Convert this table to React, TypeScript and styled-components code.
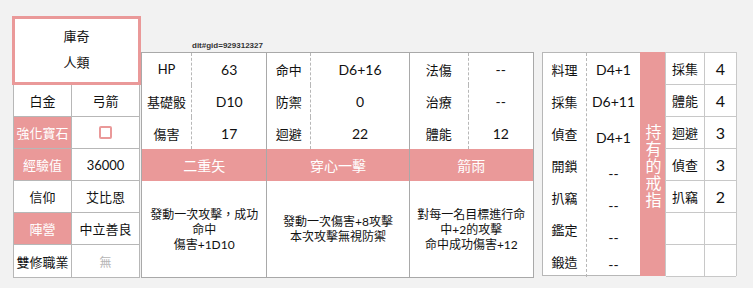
import React from 'react';
import styled, { createGlobalStyle } from 'styled-components';

const pink = '#ea9999';
const line = '#b7b7b7';

const GlobalStyle = createGlobalStyle`
  html, body {
    margin: 0;
    padding: 0;
    background: #f2f2f2;
  }
  body {
    font-family: "Lato", "Noto Sans CJK TC", sans-serif;
    color: #111;
  }
`;

const Page = styled.div`
  display: flex;
  align-items: flex-start;
  padding: 16px 0 0 12px;
  min-height: 272px;
  background: #f2f2f2;
`;

/* ---------- left: name card + profile table ---------- */

const LeftCol = styled.div`
  width: 129px;
  display: flex;
  flex-direction: column;
`;

const NameCard = styled.div`
  box-sizing: border-box;
  height: 69px;
  border: 3px solid ${pink};
  background: #fff;
  padding-top: 4px;
  display: flex;
  flex-direction: column;
  align-items: center;
  font-size: 13px;
  line-height: 26px;
`;

const Profile = styled.div`
  margin: 0 1px;
  display: grid;
  grid-template-columns: 58px 1fr;
  grid-auto-rows: 32px;
  background: #fff;
  border: 1px solid ${line};
  border-top: none;
`;

const ProfileCell = styled.div<{ $tone?: 'pink' | 'muted'; $left?: boolean; $last?: boolean }>`
  display: flex;
  align-items: center;
  justify-content: center;
  font-size: ${(p) => (p.$tone === 'muted' ? '12px' : '13px')};
  background: ${(p) => (p.$tone === 'pink' ? pink : '#fff')};
  color: ${(p) => (p.$tone === 'pink' ? '#fff' : p.$tone === 'muted' ? '#b5b5b5' : '#111')};
  border-right: ${(p) => (p.$left ? `1px solid ${line}` : 'none')};
  border-bottom: ${(p) => (p.$last ? 'none' : `1px solid ${line}`)};
`;

const CheckBox = styled.span`
  box-sizing: border-box;
  width: 13px;
  height: 13px;
  border: 2px solid ${pink};
  border-radius: 2px;
  background: #fff;
`;

/* ---------- middle: combat stats + skills ---------- */

const MidCol = styled.div`
  display: flex;
  flex-direction: column;
`;

const SheetRef = styled.div`
  margin-top: 24px;
  padding-left: 51px;
  height: 12px;
  font-family: "Liberation Sans", sans-serif;
  font-size: 8px;
  font-weight: bold;
  line-height: 12px;
  color: #333;
`;

const CombatTable = styled.div`
  display: flex;
  width: 393px;
  box-sizing: border-box;
  border: 1px solid #a9a9a9;
  background: #fff;
`;

const Group = styled.div<{ $w: number; $last?: boolean }>`
  width: ${(p) => p.$w}px;
  display: flex;
  flex-direction: column;
  border-right: ${(p) => (p.$last ? 'none' : '1px solid #a9a9a9')};
`;

const StatGrid = styled.div<{ $label: number }>`
  display: grid;
  grid-template-columns: ${(p) => p.$label}px 1fr;
  grid-auto-rows: 32px;
`;

const StatLabel = styled.div`
  display: flex;
  align-items: center;
  justify-content: center;
  font-size: 13px;
  border-right: 1px dashed ${line};
`;

const StatValue = styled.div`
  display: flex;
  align-items: center;
  justify-content: center;
  font-size: 14px;
`;

const SkillName = styled.div`
  height: 32px;
  display: flex;
  align-items: center;
  justify-content: center;
  background: ${pink};
  color: #fff;
  font-size: 14px;
`;

const SkillText = styled.div`
  height: 96px;
  display: flex;
  flex-direction: column;
  align-items: center;
  justify-content: center;
  font-size: 12px;
  line-height: 15px;
  text-align: center;
`;

/* ---------- right: life skills + ring ---------- */

const RightCol = styled.div`
  margin: 36px 0 0 8px;
  display: flex;
  height: 224px;
`;

const Crafts = styled.div`
  display: grid;
  grid-template-columns: 44px 53px;
  box-sizing: border-box;
  border: 1px solid ${line};
  border-right: none;
  background: #fff;
`;

const CraftList = styled.div<{ $dashed?: boolean }>`
  display: flex;
  flex-direction: column;
  border-right: ${(p) => (p.$dashed ? `1px dashed ${line}` : 'none')};
`;

const CraftItem = styled.div<{ $h: number; $value?: boolean }>`
  height: ${(p) => p.$h}px;
  display: flex;
  align-items: center;
  justify-content: center;
  font-size: ${(p) => (p.$value ? '14px' : '13px')};
`;

const RingLabel = styled.div`
  width: 25px;
  background: ${pink};
  color: #fff;
  display: flex;
  align-items: center;
  justify-content: center;
  padding-top: 4px;
  box-sizing: border-box;
`;

const VerticalText = styled.span`
  writing-mode: vertical-rl;
  font-size: 16px;
  letter-spacing: 1px;
  line-height: 16px;
`;

const RingGrid = styled.div`
  display: grid;
  grid-template-columns: 39px 31px;
  grid-auto-rows: 32px;
  box-sizing: border-box;
  border: 1px solid #c8c8c8;
  border-bottom: none;
  background: #fff;
`;

const RingCell = styled.div<{ $num?: boolean }>`
  display: flex;
  align-items: center;
  justify-content: center;
  font-size: ${(p) => (p.$num ? '16px' : '13px')};
  border-bottom: 1px solid #c8c8c8;
  border-right: ${(p) => (p.$num ? 'none' : '1px solid #c8c8c8')};
`;

const profile: { l: string; r: string; pinkLabel?: boolean; check?: boolean; muted?: boolean }[] = [
  { l: '白金', r: '弓箭' },
  { l: '強化寶石', r: '', pinkLabel: true, check: true },
  { l: '經驗值', r: '36000', pinkLabel: true },
  { l: '信仰', r: '艾比恩' },
  { l: '陣營', r: '中立善良', pinkLabel: true },
  { l: '雙修職業', r: '無', muted: true },
];

const groups = [
  {
    w: 125,
    label: 50,
    stats: [['HP', '63'], ['基礎骰', 'D10'], ['傷害', '17']],
    skill: '二重矢',
    text: ['發動一次攻擊，成功', '命中', '傷害+1D10'],
  },
  {
    w: 142,
    label: 44,
    stats: [['命中', 'D6+16'], ['防禦', '0'], ['迴避', '22']],
    skill: '穿心一擊',
    text: ['發動一次傷害+8攻擊', '本次攻擊無視防禦'],
  },
  {
    w: 124,
    label: 59,
    stats: [['法傷', '--'], ['治療', '--'], ['體能', '12']],
    skill: '箭雨',
    text: ['對每一名目標進行命', '中+2的攻擊', '命中成功傷害+12'],
  },
];

const craftLabels = ['料理', '採集', '偵查', '開鎖', '扒竊', '鑑定', '鍛造'];
const craftValues: [string, number][] = [
  ['D4+1', 32],
  ['D6+11', 32],
  ['D4+1', 40],
  ['--', 32],
  ['--', 32],
  ['--', 32],
  ['--', 22],
];

const ringStats = [['採集', '4'], ['體能', '4'], ['迴避', '3'], ['偵查', '3'], ['扒竊', '2'], ['', ''], ['', '']];

export default function App() {
  return (
    <>
      <GlobalStyle />
      <Page>
        <LeftCol>
          <NameCard>
            <span>庫奇</span>
            <span>人類</span>
          </NameCard>
          <Profile>
            {profile.map((row, i) => {
              const last = i === profile.length - 1;
              return (
                <React.Fragment key={row.l}>
                  <ProfileCell $left $last={last} $tone={row.pinkLabel ? 'pink' : undefined}>
                    {row.l}
                  </ProfileCell>
                  <ProfileCell $last={last} $tone={row.muted ? 'muted' : undefined}>
                    {row.check ? <CheckBox /> : row.r}
                  </ProfileCell>
                </React.Fragment>
              );
            })}
          </Profile>
        </LeftCol>

        <MidCol>
          <SheetRef>dit#gid=929312327</SheetRef>
          <CombatTable>
            {groups.map((g, gi) => (
              <Group key={g.skill} $w={g.w} $last={gi === groups.length - 1}>
                <StatGrid $label={g.label}>
                  {g.stats.map(([k, v]) => (
                    <React.Fragment key={k}>
                      <StatLabel>{k}</StatLabel>
                      <StatValue>{v}</StatValue>
                    </React.Fragment>
                  ))}
                </StatGrid>
                <SkillName>{g.skill}</SkillName>
                <SkillText>
                  {g.text.map((t) => (
                    <span key={t}>{t}</span>
                  ))}
                </SkillText>
              </Group>
            ))}
          </CombatTable>
        </MidCol>

        <RightCol>
          <Crafts>
            <CraftList $dashed>
              {craftLabels.map((c) => (
                <CraftItem key={c} $h={32}>
                  {c}
                </CraftItem>
              ))}
            </CraftList>
            <CraftList>
              {craftValues.map(([v, h], i) => (
                <CraftItem key={i} $h={h} $value>
                  {v}
                </CraftItem>
              ))}
            </CraftList>
          </Crafts>
          <RingLabel>
            <VerticalText>持有的戒指</VerticalText>
          </RingLabel>
          <RingGrid>
            {ringStats.map(([k, v], i) => (
              <React.Fragment key={i}>
                <RingCell>{k}</RingCell>
                <RingCell $num>{v}</RingCell>
              </React.Fragment>
            ))}
          </RingGrid>
        </RightCol>
      </Page>
    </>
  );
}
